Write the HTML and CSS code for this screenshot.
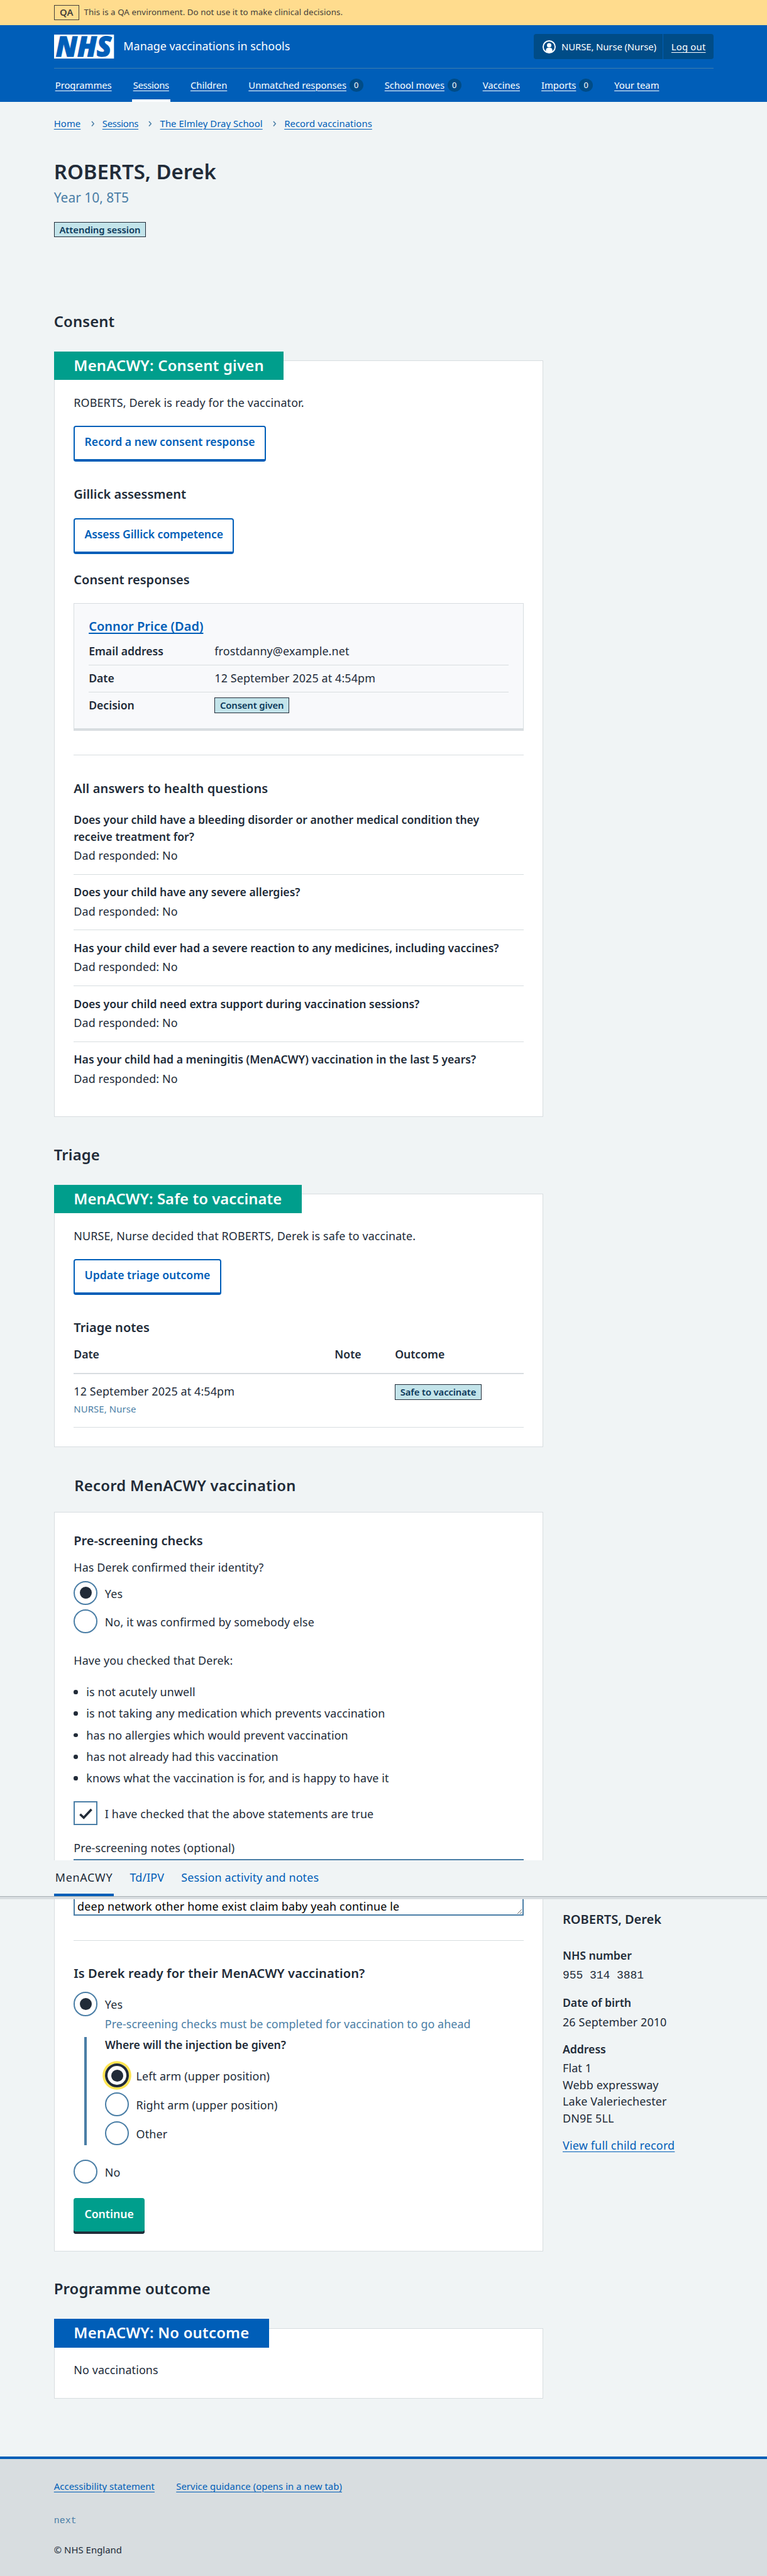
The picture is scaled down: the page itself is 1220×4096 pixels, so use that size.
FILE: index.html
```
<!DOCTYPE html>
<html lang="en">
<head>
<meta charset="utf-8">
<title>ROBERTS, Derek – Manage vaccinations in schools</title>
<link rel="stylesheet" href="styles.css">
</head>
<body>
<div class="page">
  <div class="environment">
    <strong class="environment-tag">QA</strong>
    <span>This is a QA environment. Do not use it to make clinical decisions.</span>
  </div>

  <header class="header">
    <div class="header-top">
      <svg class="logo" viewBox="0 0 100 40" width="100" height="40" role="img" aria-label="NHS">
        <rect width="100" height="40" fill="#fff"/>
        <text x="3" y="36.4" textLength="93" lengthAdjust="spacingAndGlyphs" class="logo-text">NHS</text>
      </svg>
      <a class="service-name">Manage vaccinations in schools</a>
      <div class="account">
        <span class="account-user">
          <svg width="22" height="22" viewBox="0 0 22 22" aria-hidden="true">
            <circle cx="11" cy="11" r="10" fill="none" stroke="#fff" stroke-width="2"/>
            <circle cx="11" cy="8.3" r="3.7" fill="#fff"/>
            <path d="M5.6 18.5V16.500a4 4 0 0 1 4-4h2.800a4 4 0 0 1 4 4v2A10 10 0 0 1 5.600 18.500Z" fill="#fff"/>
          </svg>
          NURSE, Nurse (Nurse)
        </span>
        <a class="account-logout"><u>Log out</u></a>
      </div>
    </div>
    <nav class="nav">
      <a><u>Programmes</u></a>
      <a class="current"><u class="tight">Sessions</u></a>
      <a><u>Children</u></a>
      <a><u>Unmatched responses</u><span class="count">0</span></a>
      <a><u>School moves</u><span class="count">0</span></a>
      <a><u>Vaccines</u></a>
      <a><u>Imports</u><span class="count">0</span></a>
      <a><u>Your team</u></a>
    </nav>
  </header>

  <main class="main">
    <nav class="breadcrumb">
      <a>Home</a>
      <svg width="6" height="10" viewBox="0 0 6 10"><path d="M1 1l3.500 4L1 9"/></svg>
      <a class="tight">Sessions</a>
      <svg width="6" height="10" viewBox="0 0 6 10"><path d="M1 1l3.500 4L1 9"/></svg>
      <a>The Elmley Dray School</a>
      <svg width="6" height="10" viewBox="0 0 6 10"><path d="M1 1l3.500 4L1 9"/></svg>
      <a>Record vaccinations</a>
    </nav>
    <h1>ROBERTS, Derek</h1>
    <p class="caption">Year 10, 8T5</p>
    <span class="tag tag-session">Attending session</span>

    <div class="columns">
      <div class="column">
        <h2>Consent</h2>
        <section class="card card-feature">
          <h3 class="badge">MenACWY: Consent given</h3>
          <p class="lead">ROBERTS, Derek is ready for the vaccinator.</p>
          <button class="button button-outline">Record a new consent response</button>
          <h4 class="after-button">Gillick assessment</h4>
          <button class="button button-outline button-gillick">Assess Gillick competence</button>
          <h4 class="responses-title">Consent responses</h4>
          <div class="response">
            <h4><a>Connor Price (Dad)</a></h4>
            <dl class="summary">
              <div><dt>Email address</dt><dd>frostdanny@example.net</dd></div>
              <div><dt>Date</dt><dd>12 September 2025 at 4:54pm</dd></div>
              <div><dt>Decision</dt><dd><span class="tag">Consent given</span></dd></div>
            </dl>
          </div>
          <hr>
          <h4 class="after-rule">All answers to health questions</h4>
          <dl class="answers">
            <div><dt>Does your child have a bleeding disorder or another medical condition they receive treatment for?</dt><dd>Dad responded: No</dd></div>
            <div><dt>Does your child have any severe allergies?</dt><dd>Dad responded: No</dd></div>
            <div><dt>Has your child ever had a severe reaction to any medicines, including vaccines?</dt><dd>Dad responded: No</dd></div>
            <div><dt>Does your child need extra support during vaccination sessions?</dt><dd>Dad responded: No</dd></div>
            <div><dt>Has your child had a meningitis (MenACWY) vaccination in the last 5 years?</dt><dd>Dad responded: No</dd></div>
          </dl>
        </section>

        <h2 class="section-title">Triage</h2>
        <section class="card card-feature">
          <h3 class="badge badge-triage">MenACWY: Safe to vaccinate</h3>
          <p class="lead">NURSE, Nurse decided that ROBERTS, Derek is safe to vaccinate.</p>
          <button class="button button-outline">Update triage outcome</button>
          <h4 class="after-button">Triage notes</h4>
          <table class="notes">
            <colgroup><col class="col-date"><col class="col-note"><col></colgroup>
            <thead><tr><th>Date</th><th>Note</th><th>Outcome</th></tr></thead>
            <tbody><tr>
              <td>12 September 2025 at 4:54pm<div class="author">NURSE, Nurse</div></td>
              <td></td>
              <td><span class="tag">Safe to vaccinate</span></td>
            </tr></tbody>
          </table>
        </section>
      </div>

      <div class="column record">
        <h2 class="record-title">Record MenACWY vaccination</h2>
        <form class="card record-card">
          <h4>Pre-screening checks</h4>
          <p class="question">Has Derek confirmed their identity?</p>
          <div class="options">
            <label class="option"><span class="radio checked"></span>Yes</label>
            <label class="option"><span class="radio"></span>No, it was confirmed by somebody else</label>
          </div>
          <p class="checks-intro">Have you checked that Derek:</p>
          <ul class="checks">
            <li>is not acutely unwell</li>
            <li>is not taking any medication which prevents vaccination</li>
            <li>has no allergies which would prevent vaccination</li>
            <li>has not already had this vaccination</li>
            <li>knows what the vaccination is for, and is happy to have it</li>
          </ul>
          <label class="option"><span class="checkbox"><svg width="24" height="20" viewBox="0 0 24 20"><path d="M2.500 11.300L8.600 17 21.500 3.200"/></svg></span>I have checked that the above statements are true</label>
          <p class="notes-label">Pre-screening notes (optional)</p>
          <textarea class="textarea" rows="1">deep network other home exist claim baby yeah continue le</textarea>
          <hr>
          <h4 class="after-rule">Is Derek ready for their MenACWY vaccination?</h4>
          <div class="ready">
            <label class="option"><span class="radio checked"></span>Yes</label>
            <p class="hint">Pre-screening checks must be completed for vaccination to go ahead</p>
            <div class="conditional">
              <p class="legend">Where will the injection be given?</p>
              <div class="options">
                <label class="option"><span class="radio checked focused"></span>Left arm (upper position)</label>
                <label class="option"><span class="radio"></span>Right arm (upper position)</label>
                <label class="option"><span class="radio"></span>Other</label>
              </div>
            </div>
            <label class="option"><span class="radio"></span>No</label>
          </div>
          <button class="button button-primary">Continue</button>
        </form>
      </div>

      <aside class="patient">
        <h4>ROBERTS, Derek</h4>
        <dl>
          <dt>NHS number</dt><dd class="mono">955 314 3881</dd>
          <dt>Date of birth</dt><dd>26 September 2010</dd>
          <dt>Address</dt><dd>Flat 1<br>Webb expressway<br>Lake Valeriechester<br>DN9E 5LL</dd>
        </dl>
        <a>View full child record</a>
      </aside>

      <div class="column">
        <h2 class="section-title">Programme outcome</h2>
        <section class="card card-feature card-outcome">
          <h3 class="badge badge-blue">MenACWY: No outcome</h3>
          <p class="lead">No vaccinations</p>
        </section>
      </div>
    </div>
  </main>

  <nav class="tabs">
    <a class="current">MenACWY</a>
    <a>Td/IPV</a>
    <a>Session activity and notes</a>
  </nav>

  <footer class="footer">
    <div class="footer-links"><a>Accessibility statement</a><a>Service guidance (opens in a new tab)</a></div>
    <p class="version">next</p>
    <p class="copyright">© NHS England</p>
  </footer>
</div>
</body>
</html>
```

FILE: styles.css
```
:root {
  --text: #212b38;
  --muted: #4a7ea6;
  --blue: #005eb8;
  --navy: #004c87;
  --green: #009e8c;
  --line: #d8dde0;
  --bg: #f0f4f5;
  /* Slightly over 2 and 4 so they do not round down once the page is zoomed */
  --border-2: 2.1px;
  --border-4: 4.2px;
}
* { box-sizing: border-box; }
body { margin: 0; background: var(--line); }
h1, h2, h3, h4, p, dl, dd, ul { margin: 0; padding: 0; }

.page {
  zoom: 0.953125;
  position: relative;
  height: 4298px;
  overflow: hidden;
  background: var(--bg);
  color: var(--text);
  font: 400 18.8px/28px "Noto Sans", "Open Sans", sans-serif;
  letter-spacing: 0.12px;
}

h1, h2, h3, h4, dt, th { font-weight: 600; }
h1 { font-size: 34.5px; line-height: 40px; letter-spacing: 0; margin-top: 48px; }
h2, h3 { font-size: 25px; line-height: 32px; letter-spacing: 0.15px; }
h4 { font-size: 21px; line-height: 28px; letter-spacing: 0; }
hr { height: 1px; margin: 40px 0 0; border: 0; background: var(--line); }

.environment {
  display: flex;
  align-items: center;
  gap: 8px;
  height: 42px;
  padding: 0 90px;
  background: #ffdc8e;
  color: #443e3a;
  font-size: 14px;
  line-height: 20px;
  letter-spacing: 0.06px;
}
.environment-tag {
  width: 42px;
  height: 26px;
  border: 1px solid currentColor;
  font-size: 15.6px;
  font-weight: 600;
  line-height: 23px;
  text-align: center;
}

.header {
  height: 128px;
  padding: 15px 90px 0;
  background: var(--blue);
  color: #fff;
}
.header-top {
  display: flex;
  align-items: center;
  height: 57px;
  width: 1101px;
  padding-bottom: 14px;
  border-bottom: 1px solid #3f7fae;
}
.logo { overflow: visible; }
.logo-text {
  fill: var(--blue);
  stroke: var(--blue);
  stroke-width: 1.2px;
  font: italic 800 46px "Open Sans", sans-serif;
  letter-spacing: 0;
}
.service-name { margin: 0 auto 3px 16px; letter-spacing: 0; }
.account {
  display: flex;
  height: 42px;
  border-radius: 4px;
  background: var(--navy);
  font-size: 15.6px;
  line-height: 42px;
  letter-spacing: -0.1px;
}
.account-user {
  display: flex;
  align-items: center;
  gap: 10px;
  width: 216px;
  padding-left: 14px;
  border-right: 1px solid var(--blue);
}
.account-logout { width: 84px; text-align: center; letter-spacing: 0.2px; }
u, .breadcrumb a, .response a, .patient a, .footer a {
  text-decoration: underline;
  text-underline-offset: 3px;
  text-decoration-thickness: 1px;
}
.nav {
  display: flex;
  gap: 31.7px;
  font-size: 15.6px;
  line-height: 24px;
  letter-spacing: -0.05px;
}
.nav a { display: flex; gap: 5px; height: 56px; padding: 16px 2px 0; }
.nav .current { border-bottom: var(--border-4) solid #fff; }
.nav .tight, .breadcrumb .tight { letter-spacing: -0.35px; }
.count {
  width: 23px;
  height: 22px;
  margin-top: 1px;
  border-radius: 50%;
  background: var(--navy);
  font-size: 13.5px;
  line-height: 22px;
  text-align: center;
}

.main { padding: 24px 90px 0; }
.breadcrumb {
  display: flex;
  align-items: center;
  gap: 15px;
  color: var(--blue);
  font-size: 15.6px;
  line-height: 24px;
  letter-spacing: 0.06px;
}
.breadcrumb svg { fill: none; stroke: var(--muted); stroke-width: 1.6; margin: 0 0 0 2px; }
.breadcrumb svg + a { margin-left: -1.8px; }
.caption { margin-top: 9.5px; color: var(--muted); font-size: 22px; letter-spacing: 0; }
.tag {
  display: block;
  width: fit-content;
  height: 26px;
  padding: 0 8px;
  border: 1px solid var(--text);
  background: #c3e4ea;
  color: #0b385a;
  font-size: 15.6px;
  font-weight: 600;
  line-height: 24px;
  letter-spacing: -0.15px;
}
.tag-session { margin-top: 26.5px; letter-spacing: -0.05px; }

.columns {
  display: grid;
  grid-template-columns: 817px 220px;
  column-gap: 32px;
  margin-top: 124px;
}
.column { grid-column: 1; }
.section-title { margin-top: 47px; }

.card {
  border: 1px solid var(--line);
  background: #fff;
  padding: 0 32px;
}
.card-feature { margin-top: 49px; padding-bottom: 32px; }
.badge {
  width: fit-content;
  height: 48px;
  margin: -16px 0 0 -33px;
  padding: 7.3px 33px 0;
  background: var(--green);
  color: #fff;
  letter-spacing: 0.25px;
}
.badge-triage { letter-spacing: 0.1px; }
.badge-blue { background: var(--blue); }
.lead { margin: 23.4px 0 24.6px; }

.button {
  display: block;
  height: 60px;
  border-radius: 4px;
  font: 600 18.5px/28px "Noto Sans", "Open Sans", sans-serif;
  letter-spacing: 0;
}
.button-outline {
  padding: 0 16px 3.6px;
  border: var(--border-2) solid var(--blue);
  border-bottom-width: var(--border-4);
  background: #fff;
  color: var(--blue);
}
.button-gillick { letter-spacing: -0.15px; }
.button-primary {
  margin-top: 24px;
  padding: 0 18px 5.600px;
  border: 0;
  background: var(--green);
  box-shadow: inset 0 -4px 0 var(--text);
  color: #fff;
}
.after-button { margin: 41.5px 0 24.5px; }
.responses-title { margin: 29.7px 0 24.3px; }
.after-rule { margin-top: 41.8px; letter-spacing: 0.12px; }

.response {
  height: 213px;
  padding: 24.8px 24px 0;
  border: 1px solid var(--line);
  border-bottom-width: var(--border-4);
  background: #f8f9fb;
}
.response a { color: var(--blue); text-decoration-thickness: 2px; }
.summary { margin-top: 5.2px; }
.summary > div { display: flex; height: 45px; padding-top: 7.2px; border-bottom: 1px solid var(--line); }
.summary > div:last-child { border: 0; }
.summary dt { width: 210px; }
.summary .tag { margin-top: 1.8px; }
dt, th, .legend { font-size: 18.5px; letter-spacing: -0.02px; }

.answers { margin-top: 8.2px; }
.answers > div { padding: 15.4px 0 16.6px; border-bottom: 1px solid var(--line); }
.answers > div:last-child { border: 0; }
.answers dt { padding-right: 32px; }
.answers dd { margin-top: 4px; }

.notes { width: 100%; margin-top: -24.5px; border-spacing: 0; table-layout: fixed; text-align: left; }
.col-date { width: 435.5px; }
.col-note { width: 100.5px; }
.notes th { padding: 16px 0 16.4px; border-bottom: var(--border-2) solid var(--line); }
.notes td { padding: 15.4px 0 17.3px; border-bottom: 1px solid var(--line); vertical-align: top; }
.notes .tag { margin-top: 1.6px; }
.author { margin-top: 3.3px; color: var(--muted); font-size: 15.6px; line-height: 24px; }

.record-title { margin: 48.3px 0 27.7px 34px; letter-spacing: 0.3px; }
.record-card { padding: 33.6px 32px 28px; }
.question { margin: 15.9px 0 8.5px; }
.options { display: flex; flex-direction: column; gap: 8px; }
.option { display: flex; gap: 12px; height: 40px; line-height: 42px; }
.radio {
  flex: none;
  display: grid;
  place-items: center;
  width: 40px;
  height: 40px;
  border: var(--border-2) solid var(--muted);
  border-radius: 50%;
}
.radio.checked::after { content: ""; width: 20px; height: 20px; border-radius: 50%; background: var(--text); }
.radio.focused { border: var(--border-4) solid var(--text); box-shadow: 0 0 0 4px #ffe552; }
.checkbox {
  display: grid;
  place-items: center;
  width: 40px;
  height: 40px;
  border: var(--border-2) solid var(--muted);
}
.checkbox svg { fill: none; stroke: var(--text); stroke-width: 3.8; }
.checks-intro { margin: 31.4px 0 24px; }
.checks { display: grid; gap: 8px; margin-bottom: 24.6px; list-style: none; }
.checks li { display: flex; align-items: center; gap: 14px; }
.checks li::before { content: ""; width: 7px; height: 7px; border-radius: 50%; background: var(--text); }
.notes-label { margin: 23.4px 0 4.6px; }
.textarea {
  display: block;
  width: 100%;
  height: 95px;
  padding: 64.500px 4px 0;
  border: var(--border-2) solid var(--muted);
  background: #fff;
  color: #000;
  font: 400 18.8px/26px "Noto Sans", "Open Sans", sans-serif;
  letter-spacing: 0.2px;
  overflow: hidden;
  resize: vertical;
}
.ready { margin-top: 16.2px; }
.hint { margin: -0.6px 0 8.6px 52px; color: var(--muted); letter-spacing: 0.05px; }
.conditional {
  height: 180px;
  margin: 0 0 24px 18px;
  padding-left: 30px;
  border-left: var(--border-4) solid var(--muted);
}
.legend { margin: 0 0 16px; font-weight: 600; line-height: 27px; }
.conditional .options { margin-top: 17px; }
.conditional .legend { margin: -0.600px 0 0; }

.patient { grid-column: 2; grid-row: 2; align-self: end; padding-bottom: 162.5px; }
.patient dl { margin-top: 32px; }
.patient dd { margin: 4px 0 17px; }
.patient .mono { margin-bottom: 15px; line-height: 32px; }
.mono { font-family: "Liberation Mono", monospace; letter-spacing: 0; }
.patient a { display: block; color: var(--blue); letter-spacing: 0.2px; }

.card-outcome { padding-bottom: 8px; }

.tabs {
  position: absolute;
  top: 3103px;
  left: 0;
  right: 0;
  display: flex;
  gap: 24.5px;
  height: 61px;
  padding: 0 90px;
  border-bottom: 1px solid #a9b0b4;
  background: var(--bg);
  box-shadow: 0 4px 0 var(--line);
  color: var(--blue);
}
.tabs a { padding: 15.2px 2px 0; }
.tabs .current { border-bottom: var(--border-4) solid var(--blue); color: var(--text); letter-spacing: 0.75px; }

.footer {
  height: 200px;
  margin-top: 96px;
  padding: 34px 90px 0;
  border-top: var(--border-4) solid var(--blue);
  background: var(--line);
  font-size: 15.6px;
  line-height: 24px;
  letter-spacing: 0.05px;
}
.footer-links { display: flex; gap: 36px; color: var(--blue); }
.version { margin: 33.8px 0 24.1px; color: var(--muted); font-family: "Liberation Mono", monospace; }
```
